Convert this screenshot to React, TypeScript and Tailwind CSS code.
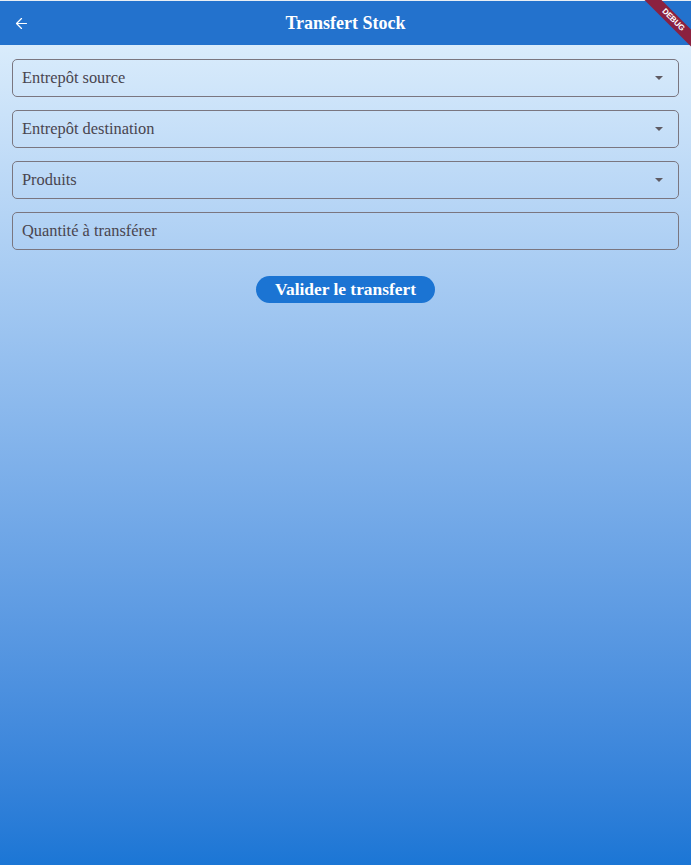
import { ArrowLeft } from "lucide-react";

const fields = [
  { label: "Entrepôt source", dropdown: true },
  { label: "Entrepôt destination", dropdown: true },
  { label: "Produits", dropdown: true },
  { label: "Quantité à transférer", dropdown: false },
];

export default function App() {
  return (
    <div
      className="relative w-[691px] h-[865px] overflow-hidden flex flex-col bg-gradient-to-b from-[#e3f2fd] to-[#1b76d5] text-[#49454f]"
      style={{ fontFamily: '"Liberation Serif", "DejaVu Serif", serif' }}
    >
      <div className="h-px bg-[#e8eef4]" />
      <header className="h-[44px] bg-[#2372cd] flex items-center px-[13px] relative">
        <ArrowLeft className="w-[17px] h-[17px] text-white" strokeWidth={1.75} />
        <h1 className="absolute inset-x-0 top-[1px] bottom-0 flex items-center justify-center text-white text-[18px] font-bold pointer-events-none">
          Transfert Stock
        </h1>
      </header>

      <main className="flex flex-col gap-[13px] px-[12px] pt-[14px]">
        {fields.map((f) => (
          <div
            key={f.label}
            className="h-[38px] border border-[#7a7680] rounded-[5px] flex items-center justify-between pl-[9px] pr-[15px]"
          >
            <span className="text-[16.4px]">{f.label}</span>
            {f.dropdown && (
              <span className="w-0 h-0 border-l-[4px] border-r-[4px] border-t-[4px] border-l-transparent border-r-transparent border-t-[#5f5b63]" />
            )}
          </div>
        ))}
        <div className="flex justify-center pt-[13px]">
          <button className="h-[27px] w-[179px] rounded-full bg-[#1b74d3] text-white text-[17.4px] font-bold leading-none">
            Valider le transfert
          </button>
        </div>
      </main>

      <div className="absolute top-0 right-0 w-[60px] h-[60px] overflow-hidden pointer-events-none">
        <div
          className="absolute top-[14px] right-[-22px] w-[80px] h-[12px] bg-[#8b2140] rotate-45 flex items-center justify-center text-white text-[8px] font-bold tracking-tight"
          style={{ fontFamily: '"Liberation Sans", sans-serif' }}
        >
          DEBUG
        </div>
      </div>
    </div>
  );
}
